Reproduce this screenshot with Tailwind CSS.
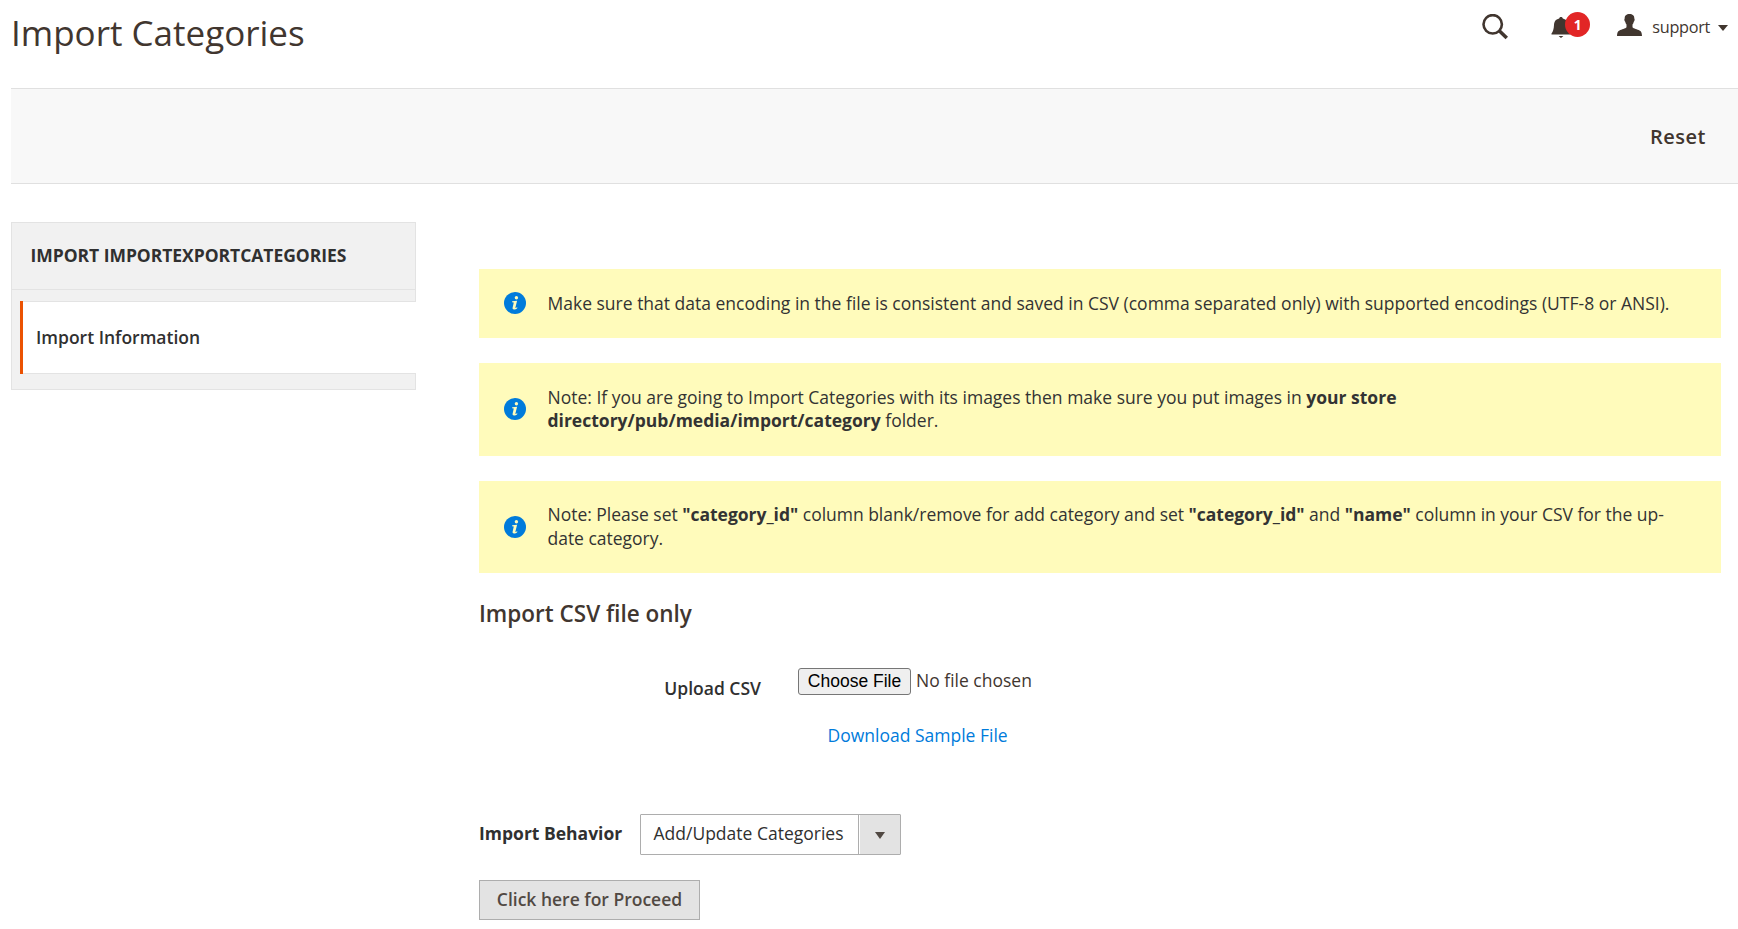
<!DOCTYPE html>
<html lang="en">
<head>
<meta charset="utf-8">
<title>Import Categories</title>
<script src="https://cdn.jsdelivr.net/npm/@tailwindcss/browser@4"></script>
</head>
<body class="h-[929px] overflow-hidden bg-white pl-[11px] font-['Open_Sans',sans-serif] text-[17.5px] leading-[23.8px] text-[#41362f]">
<header class="flex h-[88px] items-start justify-between">
  <h1 class="pt-[10px] text-[35px] leading-[46px]">Import Categories</h1>
  <div class="flex items-start text-[#41362f]">
    <svg class="mt-[14px] h-[26px] w-[26px]" viewBox="0 0 26 26" fill="none" stroke="currentColor"><circle cx="10.700" cy="10.300" r="9.200" stroke-width="2.600"/><path d="M17 16.500l7.800 7.500" stroke-width="3.600"/></svg>
    <div class="relative ml-[43px] mt-[16px] h-[24px] w-[38px]">
      <svg class="h-[22px] w-[20px]" viewBox="0 0 20 22" fill="currentColor"><path d="M10 1c1 0 1.600.6 1.800 1.400C15.500 3.300 16.800 5.500 17 9c.2 4 1 6.500 2.500 8.500v1H.5v-1C2 15.500 2.800 13 3 9c.2-3.500 1.500-5.700 5.200-6.600C8.400 1.600 9 1 10 1zM7.600 20h4.800L10 22z"/></svg>
      <span class="absolute left-[14px] top-[-4px] flex h-[25px] w-[25px] items-center justify-center rounded-full bg-[#e22626] text-[13.750px] font-bold text-white">1</span>
    </div>
    <svg class="ml-[28px] mt-[14px] h-[22px] w-[25px]" viewBox="0 0 25 22" fill="currentColor"><path d="M12.500 0c3 0 5 1.500 4.800 4.500.6.5.4 2.500-.5 3.200-.3 1.300-.8 2.300-1.300 2.900v2.600c1 1.500 5 2 7 3.200 2 1 2.300 2.500 2.500 5.600H0c.2-3.100.5-4.600 2.500-5.600 2-1.200 6-1.700 7-3.200v-2.600c-.5-.6-1-1.600-1.300-2.900-.9-.7-1.100-2.700-.5-3.200C7.500 1.500 9.500 0 12.500 0z"/></svg>
    <span class="ml-[10px] mt-[16px] text-[16.250px] tracking-[-0.3px]">support</span>
    <svg class="ml-[8px] mr-[10px] mt-[25px] h-[6px] w-[10px]" viewBox="0 0 10 6" fill="currentColor"><path d="M0 0h10L5 6z"/></svg>
  </div>
</header>
<div class="flex h-[96px] items-center justify-end border-y border-[#e0e0e0] bg-[#f8f8f8] pr-[32px]">
  <button class="mt-[2px] text-[20px] font-semibold tracking-[0.5px]">Reset</button>
</div>
<div class="flex pt-[38px]">
  <aside class="h-[168px] w-[405px] shrink-0 border border-[#e3e3e3] bg-[#f1f1f1] text-[#303030]">
    <div class="flex h-[67px] items-center border-b border-[#e3e3e3] pl-[18.500px] font-bold uppercase tracking-[-0.040px]">Import ImportExportCategories</div>
    <div class="-mr-px ml-[8px] mt-[11px] flex h-[73px]">
      <span class="w-[3px] bg-[#eb5202]"></span>
      <span class="flex flex-1 items-center border-y border-[#e3e3e3] bg-white pl-[13px] font-semibold">Import Information</span>
    </div>
  </aside>
  <main class="ml-[63px] mt-[47px] w-[1242px] shrink-0">
    <div class="flex flex-col gap-[25px] text-[#333]">
      <div class="flex h-[69px] items-center bg-[#fffbbb] pl-[24.500px] pr-[30px]">
        <svg class="mb-px mr-[22px] h-[22px] w-[22px] shrink-0" viewBox="0 0 22 22"><circle cx="11" cy="11" r="11" fill="#007bdb"/><circle cx="12.400" cy="5.700" r="1.700" fill="#fffbbb"/><path fill="#fffbbb" d="M8.200 9.200l4.900-.4-1.700 6.800c-.1.600.5.500 1.700-.4l.3.700c-1.700 1.700-5.300 2.500-4.800-.1l1.200-5.300-1.700-.3z"/></svg>
        <p>Make sure that data encoding in the file is consistent and saved in CSV (comma separated only) with supported encodings (UTF-8 or ANSI).</p>
      </div>
      <div class="flex h-[93px] items-center bg-[#fffbbb] pl-[24.500px] pr-[30px]">
        <svg class="mb-px mr-[22px] h-[22px] w-[22px] shrink-0" viewBox="0 0 22 22"><circle cx="11" cy="11" r="11" fill="#007bdb"/><circle cx="12.400" cy="5.700" r="1.700" fill="#fffbbb"/><path fill="#fffbbb" d="M8.200 9.200l4.900-.4-1.700 6.800c-.1.600.5.500 1.700-.4l.3.700c-1.700 1.700-5.300 2.500-4.800-.1l1.200-5.300-1.700-.3z"/></svg>
        <p class="pb-[2px] leading-[23px]">Note: If you are going to Import Categories with its images then make sure you put images in <b>your store<br>directory/pub/media/import/category</b> folder.</p>
      </div>
      <div class="flex h-[92px] items-center bg-[#fffbbb] pl-[24.500px] pr-[30px]">
        <svg class="mb-px mr-[22px] h-[22px] w-[22px] shrink-0" viewBox="0 0 22 22"><circle cx="11" cy="11" r="11" fill="#007bdb"/><circle cx="12.400" cy="5.700" r="1.700" fill="#fffbbb"/><path fill="#fffbbb" d="M8.200 9.200l4.900-.4-1.700 6.800c-.1.600.5.500 1.700-.4l.3.700c-1.700 1.700-5.300 2.500-4.800-.1l1.200-5.300-1.700-.3z"/></svg>
        <p class="tracking-[-0.020px]">Note: Please set <b>"category_id"</b> column blank/remove for add category and set <b>"category_id"</b> and <b>"name"</b> column in your CSV for the up-<br>date category.</p>
      </div>
    </div>
    <h2 class="mt-[26px] text-[22.500px] font-semibold leading-[30px]">Import CSV file only</h2>
    <div class="mt-[39px] flex h-[27px]">
      <label class="w-[282px] pt-[9px] text-right font-semibold text-[#303030]">Upload CSV</label>
      <button class="ml-[37px] h-[27px] w-[113px] whitespace-nowrap rounded-[3px] border border-[#767676] bg-[#efefef] font-['Liberation_Sans',sans-serif] text-[17.500px] leading-none text-black">Choose File</button>
      <span class="ml-[5px] mt-px">No file chosen</span>
    </div>
    <a class="ml-[348.500px] mt-[29px] block h-[24px] w-fit text-[#007bdb]">Download Sample File</a>
    <div class="mt-[66px] flex h-[41px] items-center text-[#303030]">
      <span class="w-[161px] pb-[2px] font-bold">Import Behavior</span>
      <div class="flex h-[41px] w-[261px] items-stretch rounded-[1px] border border-[#adadad]">
        <span class="flex w-[218px] items-center border-r border-[#adadad] pb-[2px] pl-[12.500px]">Add/Update Categories</span>
        <span class="ml-px flex flex-1 items-center justify-center bg-[#e3e3e3]"><svg class="mt-[2px] h-[7px] w-[10px]" viewBox="0 0 10 7" fill="#514943"><path d="M0 0h10L5 7z"/></svg></span>
      </div>
    </div>
    <button class="mt-[25px] flex h-[40px] w-[221px] items-center justify-center border border-[#adadad] bg-[#e3e3e3] font-semibold text-[#514943]">Click here for Proceed</button>
  </main>
</div>
</body>
</html>
